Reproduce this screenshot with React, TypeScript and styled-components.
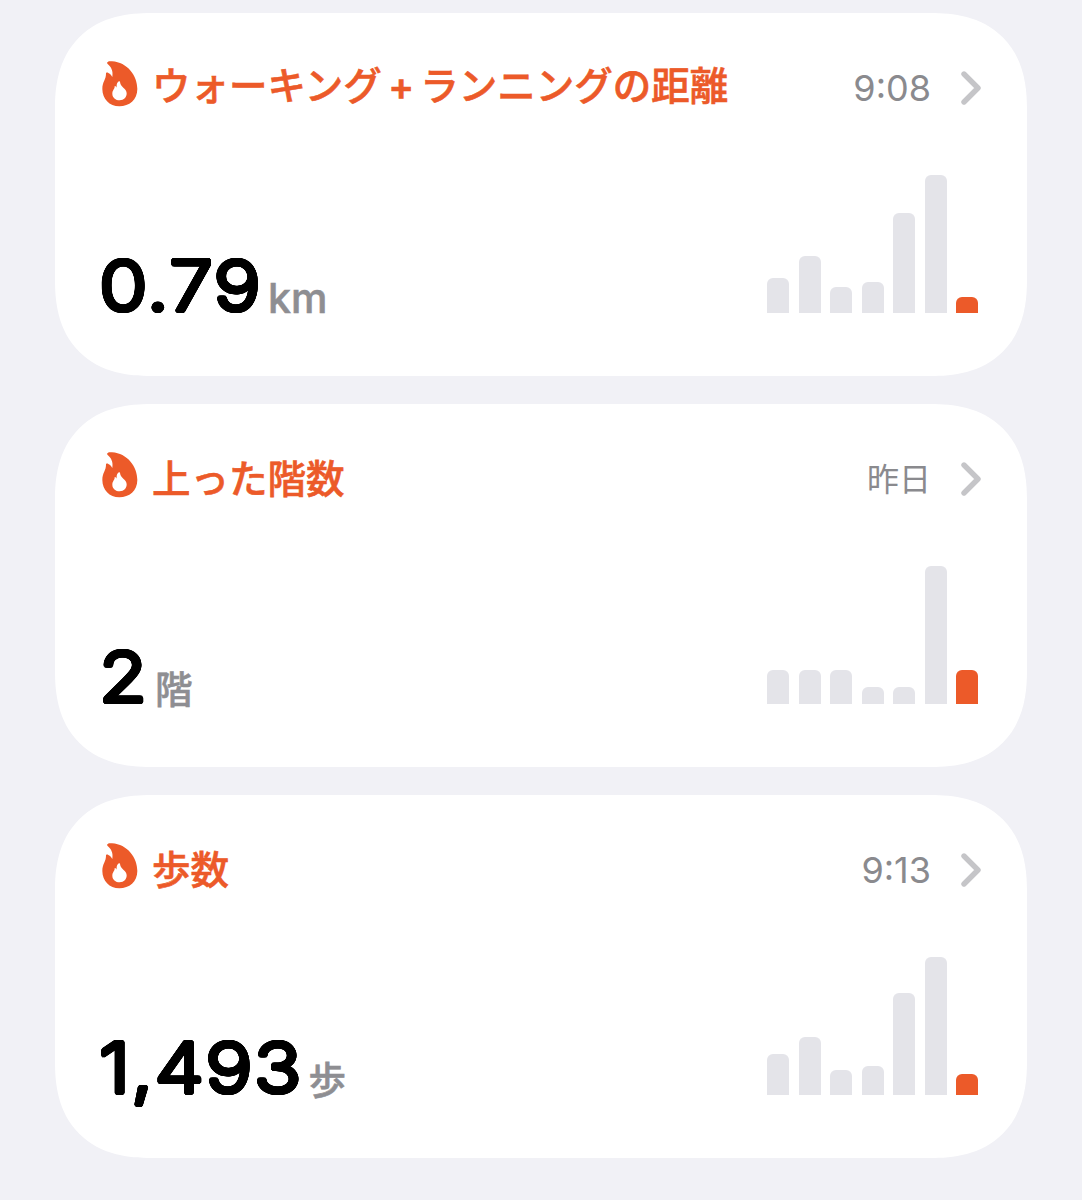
import React from "react";
import styled, { createGlobalStyle } from "styled-components";

const Global = createGlobalStyle`
  * { box-sizing: border-box; }
  body { margin: 0; background: #f1f1f6; }
`;

const sans = `Inter, "Noto Sans CJK JP", sans-serif`;

/* Thickens a light face evenly in every direction, which rounds its stroke ends. */
const roundedStroke = (radius: number) =>
  Array.from({ length: 32 }, (_, i) => {
    const a = (i / 32) * Math.PI * 2;
    return `${(Math.cos(a) * radius).toFixed(2)}px ${(Math.sin(a) * radius).toFixed(2)}px 0 #000`;
  }).join(", ");

/* The digits are drawn slightly wider than the face's own proportions. */
const STRETCH = 1.12;

const Page = styled.main`
  width: 1082px;
  height: 1200px;
  overflow: hidden;
  padding: 13px 55px 0;
  display: flex;
  flex-direction: column;
  gap: 28px;
  background: #f1f1f6;
  font-family: ${sans};
`;

const Card = styled.section`
  height: 363px;
  flex: none;
  padding: 44px 45px 63px 47px;
  display: flex;
  flex-direction: column;
  justify-content: space-between;
  background: #fff;
  border-radius: 81px;
  @supports (corner-shape: superellipse(1.25)) {
    border-radius: 96px;
    corner-shape: superellipse(1.25);
  }
`;

const Header = styled.header`
  height: 60px;
  display: flex;
  align-items: center;
`;

const Flame = styled.svg`
  width: 36px;
  height: 46px;
  margin-bottom: 7px;
  flex: none;
`;

const Title = styled.h2`
  margin: 0 0 5px 14px;
  flex: 1;
  font-family: "Noto Sans CJK JP", sans-serif;
  font-size: 38.5px;
  line-height: 56px;
  font-weight: 500;
  -webkit-text-stroke: 0.6px #ec5a29;
  color: #ec5a29;
  white-space: nowrap;
`;

const Plus = styled.span`
  display: inline-block;
  width: 38.5px;
  text-align: center;
  font-family: Inter, sans-serif;
  font-weight: 600;
`;

const Time = styled.time<{ $cjk?: boolean }>`
  font-size: ${(p) => (p.$cjk ? 32 : 36)}px;
  line-height: 44px;
  margin-top: ${(p) => (p.$cjk ? 4 : 1)}px;
  color: #8a8a8e;
`;

const Chevron = styled.svg`
  width: 22px;
  height: 34px;
  margin: 2px 0 0 29px;
  flex: none;
`;

const Body = styled.div`
  display: flex;
  justify-content: space-between;
  align-items: flex-end;
`;

const Reading = styled.div`
  display: flex;
  align-items: baseline;
  height: 73px;
  line-height: 92px;
  margin-left: -3px;
  transform: scaleX(${STRETCH});
  transform-origin: left;
`;

const Value = styled.span`
  font-size: 70px;
  font-weight: 300;
  letter-spacing: 1.2px;
  color: #000;
  text-shadow: ${roundedStroke(1.9)};
`;

const Unit = styled.span<{ $cjk?: boolean }>`
  margin-left: 5.5px;
  font-size: ${(p) => (p.$cjk ? 37.5 : 41)}px;
  font-weight: 500;
  -webkit-text-stroke: 0.6px #8e8e92;
  color: #8e8e92;
  transform: translateY(${(p) => (p.$cjk ? 1 : 2)}px) scaleX(${1 / STRETCH});
  transform-origin: left;
`;

const Chart = styled.div`
  width: 211px;
  height: 138px;
  margin-right: 4px;
  display: flex;
  justify-content: space-between;
  align-items: flex-end;
`;

const Bar = styled.i<{ $current: boolean }>`
  width: 22px;
  border-radius: 6px 6px 0 0;
  background: ${(p) => (p.$current ? "#ec5a29" : "#e4e4e9")};
`;

type Metric = {
  title: React.ReactNode;
  time: string;
  timeCjk?: boolean;
  value: string;
  unit: string;
  unitCjk?: boolean;
  bars: number[];
};

const metrics: Metric[] = [
  {
    title: <>ウォーキング<Plus>+</Plus>ランニングの距離</>,
    time: "9:08",
    value: "0.79",
    unit: "km",
    bars: [35, 57, 26, 31, 100, 138, 16],
  },
  {
    title: "上った階数",
    time: "昨日",
    timeCjk: true,
    value: "2",
    unit: "階",
    unitCjk: true,
    bars: [34, 34, 34, 17, 17, 138, 34],
  },
  {
    title: "歩数",
    time: "9:13",
    value: "1,493",
    unit: "歩",
    unitCjk: true,
    bars: [41, 58, 25, 29, 102, 138, 21],
  },
];

function FlameIcon() {
  return (
    <Flame viewBox="0 0 108 138">
      <path
        fill="#ec5a29"
        fillRule="evenodd"
        d="M16 4C18 0 24 0 30 1C76 4 106 44 106 84C106 116 82 136 52 136C22 136 1 113 1 84C1 62 12 56 12 38C12 34 16 34 19 36C25 39 29 44 31 48C34 30 28 18 17 9C15 7 15 6 16 4ZM51 61C44 64 43 74 45 82C44 77 41 75 38 75C39 84 31 87 31 98C31 110 41 118 53 118C66 118 74 109 74 97C74 82 56 80 54 63C54 61 53 60 51 61Z"
      />
    </Flame>
  );
}

export default function App() {
  return (
    <>
      <Global />
      <Page>
        {metrics.map((m) => (
          <Card key={m.value}>
            <Header>
              <FlameIcon />
              <Title>{m.title}</Title>
              <Time $cjk={m.timeCjk}>{m.time}</Time>
              <Chevron viewBox="0 0 22 34">
                <path d="M4 3L18 17L4 31" fill="none" stroke="#c5c5c8" strokeWidth="5.4" strokeLinecap="round" strokeLinejoin="round" />
              </Chevron>
            </Header>
            <Body>
              <Reading>
                <Value>{m.value}</Value>
                <Unit $cjk={m.unitCjk}>{m.unit}</Unit>
              </Reading>
              <Chart>
                {m.bars.map((h, i) => (
                  <Bar key={i} $current={i === 6} style={{ height: h }} />
                ))}
              </Chart>
            </Body>
          </Card>
        ))}
      </Page>
    </>
  );
}
